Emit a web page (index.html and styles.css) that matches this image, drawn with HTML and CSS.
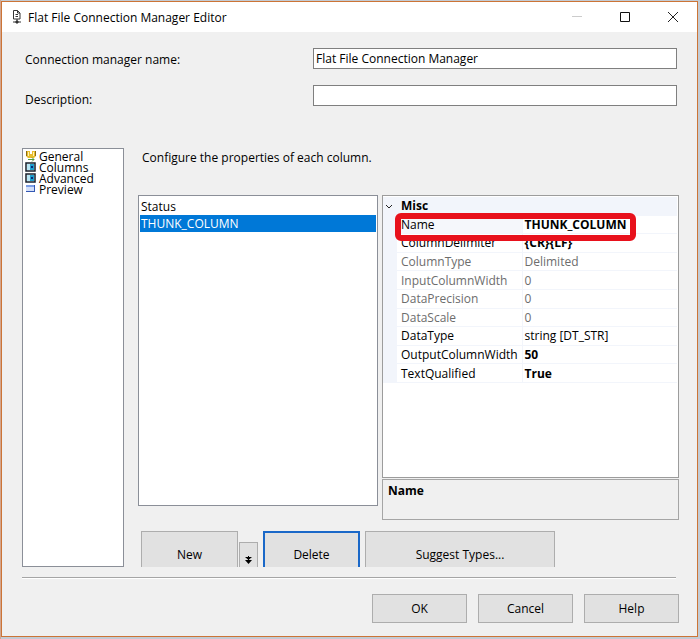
FILE: index.html
```html
<!DOCTYPE html>
<html lang="en">
<head>
    <meta charset="UTF-8">
    <meta name="viewport" content="width=device-width, initial-scale=1.0">
    <title>Flat File Connection Manager Editor</title>
    <link rel="stylesheet" href="styles.css">
</head>
<body>

    <div class="window">
        <header class="titlebar">
            <svg class="app-icon" width="10" height="14" viewBox="0 0 10 14" fill="none" stroke="#333">
                <path d="M1.500 .5h4l2.500 2.500v6h-6.500z"/>
                <path d="M5.500 .5v2.500h2.500M3.500 4.500h2.500M3.500 6.500h2.500"/>
                <path d="M5 9v2M1 12h8"/>
                <path d="M4 11h2v2h-2z" fill="#333"/>
            </svg>
            <h1 class="title">Flat File Connection Manager Editor</h1>
            <button type="button" class="win-btn" aria-label="Minimize" disabled>
                <svg width="12" height="12" viewBox="0 0 12 12" stroke="#ccc"><path d="M1 5.500h10"/></svg>
            </button>
            <button type="button" class="win-btn" aria-label="Maximize">
                <svg width="12" height="12" viewBox="0 0 12 12" stroke="#111" fill="none"><path d="M1.500 1.500h9v9h-9z"/></svg>
            </button>
            <button type="button" class="win-btn" aria-label="Close">
                <svg width="12" height="12" viewBox="0 0 12 12" stroke="#222"><path d="M1 1l10 10M11 1l-10 10"/></svg>
            </button>
        </header>

        <form class="editor">
            <div class="fields">
                <div class="labels">
                    <label for="managerName">Connection manager name:</label>
                    <label for="description">Description:</label>
                </div>
                <div class="inputs">
                    <input type="text" id="managerName" value="Flat File Connection Manager">
                    <input type="text" id="description">
                </div>
            </div>

            <div class="content">
                <nav class="pages">
                    <a href="#general">
                        <svg width="12" height="11" viewBox="0 0 12 11">
                            <path d="M1 0h4v3h2v-3h4v5l-2 2h-6l-2-2z" fill="#e8bd2c"/>
                            <path d="M1.500 0v5M10.500 0v5" stroke="#8b6b12"/>
                            <path d="M3 1h1v4h-1zM8 1h1v4h-1z" fill="#fff3b0"/>
                            <path d="M3 8.500h6M7 6.500l2 2-2 2" stroke="#4f9a3c" fill="none"/>
                        </svg>
                        General</a>
                    <a href="#columns">
                        <svg width="12" height="11" viewBox="0 0 12 11">
                            <path d="M1 1h9v8h-9z" fill="#fff" stroke="#17202c" stroke-width="1.500"/>
                            <path d="M2 2h3v6h-3z" fill="#b9e6f4"/>
                            <path d="M5 2h4v6h-4z" fill="#1fa0cf"/>
                            <path d="M6 4h2v2h-2z" fill="#062a75"/>
                        </svg>
                        Columns</a>
                    <a href="#advanced">
                        <svg width="12" height="11" viewBox="0 0 12 11">
                            <path d="M1 1h9v8h-9z" fill="#fff" stroke="#17202c" stroke-width="1.500"/>
                            <path d="M2 2h3v6h-3z" fill="#b9e6f4"/>
                            <path d="M5 2h4v6h-4z" fill="#1fa0cf"/>
                            <path d="M6 4h2v2h-2z" fill="#062a75"/>
                        </svg>
                        Advanced</a>
                    <a href="#preview">
                        <svg width="12" height="11" viewBox="0 0 12 11">
                            <path d="M1 1h9v7h-9z" fill="#d3dff8"/>
                            <path d="M1 1h9v2h-9z" fill="#7c9ee6"/>
                            <path d="M1 7.500h9M9.500 1v7" stroke="#3458b4"/>
                        </svg>
                        Preview</a>
                </nav>

                <div class="main">
                    <label class="hint" for="columnList">Configure the properties of each column.</label>

                    <div class="panels">
                        <select id="columnList" class="column-list" size="2">
                            <option>Status</option>
                            <option selected>THUNK_COLUMN</option>
                        </select>

                        <div class="properties">
                            <div class="grid-box">
                                <table class="grid">
                                    <colgroup>
                                        <col class="col-gutter">
                                        <col class="col-key">
                                        <col>
                                    </colgroup>
                                    <tr class="category">
                                        <td class="gutter"><svg width="8" height="6" viewBox="0 0 8 6" fill="none" stroke="#222"><path d="M1 1l3 3 3-3"/></svg></td>
                                        <th colspan="2">Misc</th>
                                    </tr>
                                    <tr class="set selected"><td class="gutter"></td><td class="key">Name</td><td>THUNK_COLUMN</td></tr>
                                    <tr class="set"><td class="gutter"></td><td class="key">ColumnDelimiter</td><td>{CR}{LF}</td></tr>
                                    <tr class="readonly"><td class="gutter"></td><td class="key">ColumnType</td><td>Delimited</td></tr>
                                    <tr class="readonly"><td class="gutter"></td><td class="key">InputColumnWidth</td><td>0</td></tr>
                                    <tr class="readonly"><td class="gutter"></td><td class="key">DataPrecision</td><td>0</td></tr>
                                    <tr class="readonly"><td class="gutter"></td><td class="key">DataScale</td><td>0</td></tr>
                                    <tr><td class="gutter"></td><td class="key">DataType</td><td>string [DT_STR]</td></tr>
                                    <tr class="set"><td class="gutter"></td><td class="key">OutputColumnWidth</td><td>50</td></tr>
                                    <tr class="set"><td class="gutter"></td><td class="key">TextQualified</td><td>True</td></tr>
                                </table>
                                <div class="highlight"></div>
                            </div>
                            <div class="help-box">Name</div>
                        </div>
                    </div>

                    <div class="actions">
                        <button type="button" class="new">New</button>
                        <button type="button" class="more" aria-label="More">
                            <svg width="7" height="8" viewBox="0 0 7 8"><path d="M0 1h7l-3.500 3zM0 4h7l-3.500 4z" fill="#000"/><path d="M3.500 0v5" stroke="#000"/></svg>
                        </button>
                        <button type="button" class="delete">Delete</button>
                        <button type="button" class="suggest">Suggest Types...</button>
                    </div>
                </div>
            </div>

            <hr class="divider">

            <div class="footer">
                <button type="button">OK</button>
                <button type="button">Cancel</button>
                <button type="button">Help</button>
            </div>
        </form>
    </div>

</body>
</html>
```
FILE: styles.css
```css
* {
    box-sizing: border-box;
}

body {
    display: flex;
    min-height: 100vh;
    margin: 0;
    padding: 1px 2px 2px 1px;
    background: linear-gradient(to right, #d3a68f 1px, #c3cbd4 1px);
    color: #000;
}

body, input, select, button {
    font-family: "Open Sans", "Noto Sans", sans-serif;
    font-size: 12px;
}

.window {
    display: flex;
    flex-direction: column;
    flex: 1;
    border: 1px solid #cc7436;
    background-color: #f0f0f0;
}

/* title bar */
.titlebar {
    display: flex;
    align-items: center;
    height: 30px;
    padding-left: 10px;
    background-color: #fff;
}

.title {
    flex: 1;
    margin: 0 0 0 6px;
    font-size: 12px;
    font-weight: normal;
}

.win-btn {
    display: flex;
    align-items: center;
    justify-content: center;
    width: 48px;
    height: 30px;
    padding: 0;
    border: none;
    background: none;
}

.editor {
    display: flex;
    flex-direction: column;
    flex: 1;
    padding: 16px 18px 13px 20px;
}

.fields {
    display: flex;
    padding: 0 2px 0 3px;
}

.labels {
    display: flex;
    flex-direction: column;
    gap: 22px;
    width: 288px;
    padding-top: 3px;
    line-height: 18px;
}

.inputs {
    display: flex;
    flex-direction: column;
    flex: 1;
    gap: 16px;
}

.inputs input {
    width: 100%;
    height: 21px;
    padding: 0 2px;
    border: 1px solid #7f7f7f;
    border-radius: 0;
    background-color: #fff;
}

.content {
    display: flex;
    flex: 1;
    gap: 14px;
    margin-top: 39px;
}

/* page list on the left */
.pages {
    width: 102px;
    padding: 2px;
    border: 1px solid #8b8f98;
    background-color: #fff;
}

.pages a {
    display: flex;
    gap: 2px;
    height: 11px;
    line-height: 11px;
    color: #000;
    text-decoration: none;
}

.main {
    display: flex;
    flex-direction: column;
    flex: 1;
}

.hint {
    margin-bottom: 27px;
    padding-left: 4px;
    line-height: 20px;
}

.panels {
    display: grid;
    grid-template-columns: 240fr 297fr;
    gap: 4px;
    flex: 1;
}

.column-list {
    margin-bottom: 14px;
    padding: 2px 1px;
    border: 1px solid #8b8f98;
    border-radius: 0;
    background-color: #fff;
    outline: none;
}

.column-list option {
    min-height: 17px;
    padding: 0 1px;
    line-height: 17px;
}

.column-list option:checked {
    background: linear-gradient(#0078d7, #0078d7);
    -webkit-text-fill-color: #fff;
}

.properties {
    display: flex;
    flex-direction: column;
    gap: 1px;
}

/* property grid */
.grid-box {
    position: relative;
    flex: 1;
    padding: 1px 1px 0 0;
    border: 1px solid #9c9c9c;
    background-color: #fff;
}

.grid {
    width: 100%;
    height: 186px;
    border-collapse: collapse;
    table-layout: fixed;
    line-height: 16px;
}

.col-gutter {
    width: 14px;
}

.col-key {
    width: 125px;
}

.grid td, .grid th {
    padding: 1px 2px 0;
    border-bottom: 1px solid #f2f5fb;
    text-align: left;
    white-space: nowrap;
}

.grid .gutter {
    background-color: #f2f5fb;
}

.grid .key {
    padding-left: 4px;
    border-right: 1px solid #f2f5fb;
}

.grid .category th {
    padding-left: 4px;
    background-color: #f2f5fb;
}

.grid .selected .key {
    background-color: #f5f7fb;
}

.grid .set td:last-child {
    font-weight: bold;
}

.grid .readonly {
    color: #6d6d6d;
}

/* red marker round the selected row */
.highlight {
    position: absolute;
    top: 17px;
    left: 12px;
    width: 241px;
    height: 28px;
    border: 6px solid #e8111c;
    border-radius: 6px;
}

.help-box {
    height: 41px;
    padding: 3px 5px;
    border: 1px solid #a5a5a5;
    font-weight: bold;
    line-height: 16px;
}

button {
    border: 1px solid #adadad;
    border-radius: 0;
    background-color: #e1e1e1;
    color: #000;
}

/* the lower edge of the buttons is cut off by the row */
.actions {
    display: flex;
    align-items: flex-start;
    height: 36px;
    margin-top: 11px;
    padding-left: 3px;
    overflow: hidden;
}

.actions button {
    height: 46px;
}

.actions .new {
    width: 97px;
}

.actions .more {
    width: 19px;
    height: 35px;
    margin: 11px 5px 0 1px;
    padding: 0;
}

.actions .delete {
    width: 97px;
    border: 2px solid #1a68c8;
}

.actions .suggest {
    width: 190px;
    margin-left: 5px;
}

.divider {
    width: calc(100% - 3px);
    margin: 10px 0 15px;
    border: none;
    border-top: 1px solid #a5a5a5;
    border-bottom: 1px solid #fff;
}

.footer {
    display: flex;
    justify-content: flex-end;
    gap: 11px;
}

.footer button {
    width: 95px;
    height: 29px;
}
```
